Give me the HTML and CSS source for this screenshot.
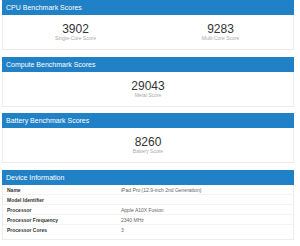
FILE: index.html
```html
<!DOCTYPE html>
<html lang="en">
<head>
    <meta charset="UTF-8">
    <meta name="viewport" content="width=device-width, initial-scale=1.0">
    <title>Geekbench Result</title>
    <link rel="stylesheet" href="styles.css">
</head>
<body>
    <div class="card">
        <div class="card-header">CPU Benchmark Scores</div>
        <div class="scores">
            <div class="score">
                <div class="score-value">3902</div>
                <div class="score-label">Single-Core Score</div>
            </div>
            <div class="score">
                <div class="score-value">9283</div>
                <div class="score-label">Multi-Core Score</div>
            </div>
        </div>
    </div>

    <div class="card">
        <div class="card-header">Compute Benchmark Scores</div>
        <div class="scores">
            <div class="score">
                <div class="score-value">29043</div>
                <div class="score-label">Metal Score</div>
            </div>
        </div>
    </div>

    <div class="card">
        <div class="card-header">Battery Benchmark Scores</div>
        <div class="scores">
            <div class="score">
                <div class="score-value">8260</div>
                <div class="score-label">Battery Score</div>
            </div>
        </div>
    </div>

    <div class="card">
        <div class="card-header">Device Information</div>
        <table class="info-table">
            <tr><th>Name</th><td>iPad Pro (12.9-inch 2nd Generation)</td></tr>
            <tr><th>Model Identifier</th><td></td></tr>
            <tr><th>Processor</th><td>Apple A10X Fusion</td></tr>
            <tr><th>Processor Frequency</th><td>2340 MHz</td></tr>
            <tr><th>Processor Cores</th><td>3</td></tr>
        </table>
    </div>
</body>
</html>
```

FILE: styles.css
```css
body {
    font-family: "Liberation Sans", Arial, sans-serif;
    margin: 0;
    padding: 0 6px 0 2px;
    background-color: #fff;
}
.card {
    border: 1px solid #ececec;
    border-top: none;
    margin-bottom: 6.7px;
    background-color: #fff;
}
.card-header {
    background-color: #2181c6;
    color: #fff;
    font-size: 7px;
    line-height: 15px;
    height: 15px;
    padding-left: 4px;
    margin: 0 -1px;
}
.scores {
    display: flex;
    padding: 8px 0 8px;
}
.score {
    flex: 1;
    text-align: center;
}
.score-value {
    font-size: 12px;
    line-height: 12px;
    color: #333;
}
.score-label {
    font-size: 5px;
    line-height: 6px;
    color: #aaa;
}
.info-table {
    width: 100%;
    border-collapse: collapse;
    margin-bottom: 5px;
    font-size: 5px;
}
.info-table th,
.info-table td {
    height: 9px;
    padding: 0 0 0 4px;
    text-align: left;
    border-bottom: 1px solid #f4f4f4;
}
.info-table tr:last-child th,
.info-table tr:last-child td {
    border-bottom: none;
}
.info-table th {
    width: 110px;
    color: #333;
    font-weight: bold;
}
.info-table td {
    color: #666;
}
```
